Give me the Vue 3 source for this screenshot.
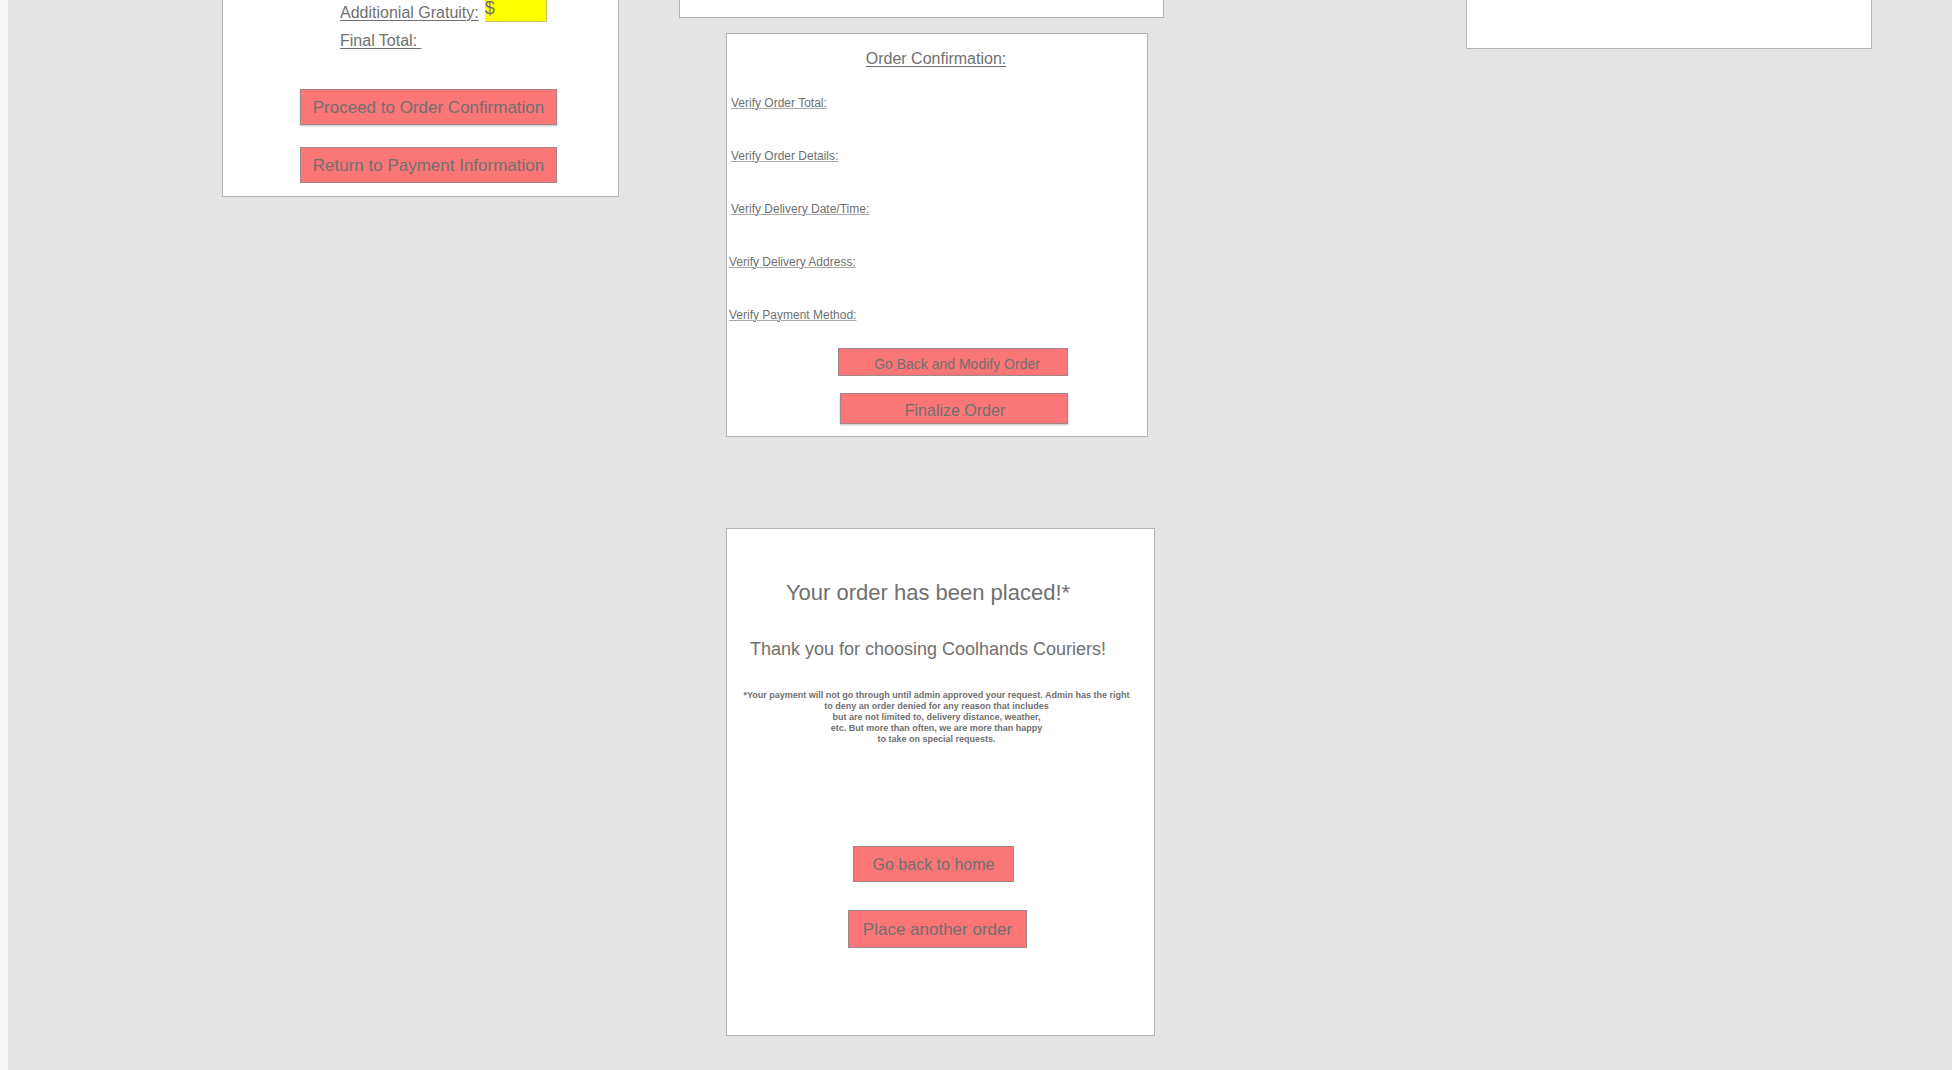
<script setup>
import { ref } from 'vue'

const gratuity = ref('$')

const checks = [
  { label: 'Verify Order Total:', inset: true },
  { label: 'Verify Order Details:', inset: true },
  { label: 'Verify Delivery Date/Time:', inset: true },
  { label: 'Verify Delivery Address:', inset: false },
  { label: 'Verify Payment Method:', inset: false },
]

const notice = [
  '*Your payment will not go through until admin approved your request. Admin has the right',
  'to deny an order denied for any reason that includes',
  'but are not limited to, delivery distance, weather,',
  'etc. But more than often, we are more than happy',
  'to take on special requests.',
]
</script>

<template>
  <main class="board">
    <form class="card cut totals" @submit.prevent>
      <div class="field">
        <label class="line" for="gratuity">Additionial Gratuity:</label>
        <input id="gratuity" v-model="gratuity" class="amount" type="text" />
      </div>
      <p class="line final">Final Total:&nbsp;</p>
      <div class="totals-actions">
        <button type="button" class="btn raised large">Proceed to Order Confirmation</button>
        <button type="button" class="btn large">Return to Payment Information</button>
      </div>
    </form>

    <div class="middle">
      <section class="card cut stub"></section>

      <section class="card confirm">
        <h2 class="line title">Order Confirmation:</h2>
        <ul class="checks">
          <li v-for="c in checks" :key="c.label" :class="{ inset: c.inset }">
            <span>{{ c.label }}</span>
          </li>
        </ul>
        <div class="confirm-actions">
          <button type="button" class="btn modify">Go Back and Modify Order</button>
          <button type="button" class="btn raised finalize">Finalize Order</button>
        </div>
      </section>

      <section class="card placed">
        <h1>Your order has been placed!*</h1>
        <p class="thanks">Thank you for choosing Coolhands Couriers!</p>
        <p class="notice">
          <span v-for="n in notice" :key="n">{{ n }}</span>
        </p>
        <div class="placed-actions">
          <button type="button" class="btn home">Go back to home</button>
          <button type="button" class="btn large another">Place another order</button>
        </div>
      </section>
    </div>

    <section class="card cut side"></section>
  </main>
</template>

<style>
body {
  margin: 0;
  background: #e4e4e4;
}
</style>

<style scoped>
.board,
.board * {
  box-sizing: border-box;
}

.board {
  display: grid;
  grid-template-columns:
    minmax(0, 214fr) minmax(397px, 397fr) minmax(0, 60fr) minmax(485px, 485fr)
    minmax(0, 302fr) minmax(0, 406fr) minmax(0, 80fr);
  align-items: start;
  min-height: 100vh;
  border-left: 8px solid #f7f7f7;
  background: #e4e4e4;
  color: #707070;
  font-family: "Liberation Sans", Arial, sans-serif;
  font-size: 16px;
}

h1,
h2,
p,
ul {
  margin: 0;
  padding: 0;
  font-weight: normal;
}

.card {
  background: #fff;
  border: 1px solid #b4b4b4;
}

.cut {
  border-top: 0;
}

.line {
  font-size: 16px;
  line-height: 26px;
  text-decoration: underline;
  text-decoration-thickness: 1px;
  text-underline-offset: 2px;
}

.btn {
  height: 36px;
  padding: 2px 0 0;
  border: 1px solid #a08888;
  border-radius: 0;
  background: #fb7676;
  color: #707070;
  font-family: inherit;
  font-size: 16px;
}

.large {
  font-size: 17px;
}

.raised {
  box-shadow: 0 1px 2px rgba(0, 0, 0, 0.25);
}

/* Totals */
.totals {
  grid-column: 2;
  padding-bottom: 13px;
}

.field {
  display: flex;
  align-items: flex-start;
  gap: 6px;
  padding-left: 117px;
}

.amount {
  width: 62px;
  height: 22px;
  padding: 0 0 4px;
  border: 1px solid #c4c46a;
  border-width: 0 1px 1px 0;
  border-radius: 0;
  background: #ffff00;
  color: #707070;
  font-family: inherit;
  font-size: 18px;
}

.final {
  margin: 2px 0 35px;
  padding-left: 117px;
}

.totals-actions {
  display: flex;
  flex-direction: column;
  gap: 22px;
  width: 257px;
  margin-left: 77px;
}

/* Middle column */
.middle {
  grid-column: 4;
}

.stub {
  height: 18px;
}

.confirm {
  width: 422px;
  margin: 15px 0 0 47px;
  padding: 12px 0;
}

.title {
  padding-right: 2px;
  text-align: center;
}

.checks {
  margin-top: 5px;
  padding-left: 2px;
  list-style: none;
  font-size: 12px;
  line-height: 53px;
}

.checks span {
  text-decoration: underline;
  text-decoration-color: #a8a8a8;
  text-decoration-thickness: 1px;
  text-underline-offset: 1px;
}

.inset {
  padding-left: 2px;
}

.confirm-actions {
  display: flex;
  flex-direction: column;
  align-items: flex-end;
  gap: 17px;
  margin-top: 6px;
  padding-right: 79px;
}

.modify {
  width: 230px;
  height: 28px;
  padding: 3px 0 0 8px;
  font-size: 14px;
}

.finalize {
  width: 228px;
  height: 31px;
  padding: 4px 0 0 2px;
}

.placed {
  width: 429px;
  margin: 91px 0 0 47px;
  padding: 51px 0 87px;
  text-align: center;
}

.placed h1,
.thanks {
  padding-right: 25px;
  font-size: 22px;
  line-height: 26px;
  white-space: nowrap;
}

.placed .thanks {
  margin-top: 30px;
  font-size: 18px;
}

.notice {
  margin-top: 28px;
  padding-right: 8px;
  font-size: 9px;
  font-weight: bold;
  line-height: 11px;
}

.notice span {
  display: block;
  white-space: nowrap;
}

.placed-actions {
  display: flex;
  flex-direction: column;
  align-items: center;
  gap: 28px;
  margin-top: 101px;
  padding-right: 6px;
}

.home {
  width: 161px;
  margin-right: 8px;
}

.another {
  width: 179px;
  height: 38px;
}

/* Right column */
.side {
  grid-column: 6;
  height: 49px;
}
</style>
